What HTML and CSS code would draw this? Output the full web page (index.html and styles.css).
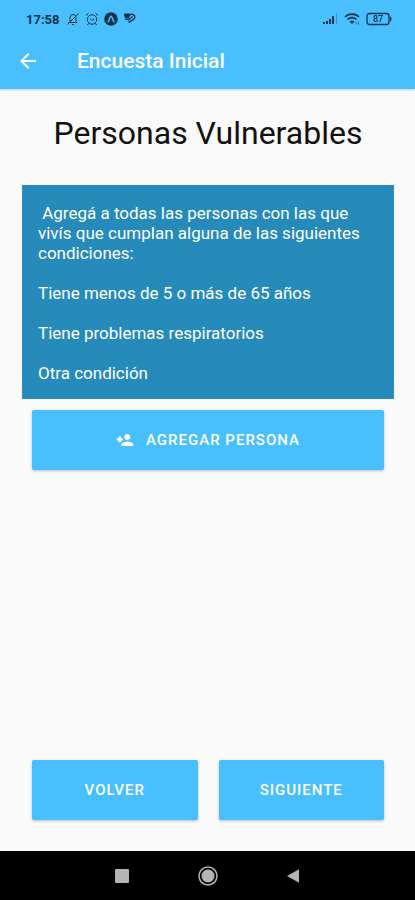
FILE: index.html
```html
<!DOCTYPE html>
<html lang="es">
<head>
    <meta charset="UTF-8">
    <title>Encuesta Inicial</title>
    <meta name="viewport" content="width=device-width, initial-scale=1.0">
    <link rel="stylesheet" href="styles.css">
</head>
<body>
    <header>
        <div class="status-bar">
            <span class="clock">17:58</span>
            <div class="status-icons">
                <svg width="14" height="14" viewBox="0 0 14 14" fill="none" stroke="currentColor">
                    <path d="M2.5 10.5h9M4 10V6.500C4 4 5 2.500 7 2.500S10 4 10 6.500V10M6 12.500h2M12.500 1.500L1.500 12.500"/>
                </svg>
                <svg width="14" height="14" viewBox="0 0 14 14" fill="none" stroke="currentColor">
                    <circle cx="7" cy="7.500" r="4.700"/>
                    <path d="M1 3.500L3.500 1.200M13 3.500L10.500 1.200M5 6.500L7 8.500L9.200 7M3.500 11.500L2.500 13M10.500 11.500L11.500 13"/>
                </svg>
                <svg width="14" height="14" viewBox="0 0 14 14">
                    <circle cx="7" cy="7" r="6.800" fill="currentColor"/>
                    <path d="M4 9.800C5.500 8 6 4 7 4S8.500 8 10 9.800" fill="none" stroke="#49bfff" stroke-width="1.500" stroke-linecap="round"/>
                </svg>
                <svg width="14" height="14" viewBox="0 0 14 14" fill="none" stroke="currentColor">
                    <path d="M1.500 2h5L5.500 6L2 5z" fill="currentColor"/>
                    <path d="M6 3C9 1.500 12 2.500 11.800 5.500C11.500 8 8 8.500 5.500 10.500M2 7L5.500 7.500L9.500 4.500" stroke-width="1.500"/>
                </svg>
            </div>
            <div class="status-icons status-right">
                <svg width="16" height="14" viewBox="0 0 16 14" fill="currentColor">
                    <path d="M1 10h2v2H1zM4 9h2v3H4zM7 7h2v5H7zM10 4h2v8h-2z"/>
                    <path d="M14 1h1v11h-1z" opacity=".3"/>
                </svg>
                <svg width="16" height="14" viewBox="0 0 16 14" fill="none" stroke="currentColor" stroke-width="1.600">
                    <path d="M1 5C4.500 1.200 11.500 1.200 15 5M3.500 7.500C6 5 10 5 12.500 7.500"/>
                    <path d="M5.500 9.500C7 8.300 9 8.300 10.500 9.500L8 12z" fill="currentColor" stroke="none"/>
                    <path d="M12 9.500v3M14.500 9.500v3" stroke-width="1" opacity=".6"/>
                </svg>
                <div class="battery">
                    <svg width="27" height="14" viewBox="0 0 27 14" fill="none" stroke="currentColor" stroke-width="1.300">
                        <rect x="1" y="1.500" width="22" height="11" rx="2.500"/>
                        <path d="M24 4Q27 7 24 10z" fill="currentColor" stroke="none"/>
                    </svg>
                    <span>87</span>
                </div>
            </div>
        </div>
        <div class="app-bar">
            <button class="back" type="button" aria-label="Atrás">
                <svg width="24" height="24" viewBox="0 0 24 24" fill="currentColor">
                    <path d="M20 11H7.830l5.590-5.590L12 4l-8 8 8 8 1.410-1.410L7.830 13H20v-2z"/>
                </svg>
            </button>
            <h1>Encuesta Inicial</h1>
        </div>
    </header>

    <main>
        <h2>Personas Vulnerables</h2>
        <div class="info">
            <p>&nbsp;Agregá a todas las personas con las que vivís que cumplan alguna de las siguientes condiciones:</p>
            <p>Tiene menos de 5 o más de 65 años</p>
            <p>Tiene problemas respiratorios</p>
            <p>Otra condición</p>
        </div>
        <div class="actions">
            <button class="btn" type="button">
                <svg width="18" height="18" viewBox="0 0 24 24" fill="currentColor">
                    <path d="M15 12c2.210 0 4-1.790 4-4s-1.790-4-4-4-4 1.790-4 4 1.790 4 4 4zm-8.500-2.500V7h-3v2.500H1v3h2.500V15h3v-2.500H9v-3zm8.500 4.500c-2.670 0-8 1.340-8 4v2h16v-2c0-2.660-5.330-4-8-4z"/>
                </svg>
                AGREGAR PERSONA
            </button>
        </div>
        <div class="actions bottom">
            <button class="btn" type="button">VOLVER</button>
            <button class="btn" type="button">SIGUIENTE</button>
        </div>
    </main>

    <nav class="system-nav">
        <button type="button" aria-label="Recientes">
            <svg width="20" height="20" viewBox="0 0 20 20"><rect x="3" y="3" width="14" height="14" rx="1" fill="currentColor"/></svg>
        </button>
        <button type="button" aria-label="Inicio">
            <svg width="20" height="20" viewBox="0 0 20 20">
                <circle cx="10" cy="10" r="9" fill="none" stroke="currentColor" stroke-width="1.500"/>
                <circle cx="10" cy="10" r="6.500" fill="currentColor"/>
            </svg>
        </button>
        <button type="button" aria-label="Volver atrás">
            <svg width="20" height="20" viewBox="0 0 20 20"><path d="M3 10L15 3.200V16.800z" fill="currentColor"/></svg>
        </button>
    </nav>
</body>
</html>
```

FILE: styles.css
```css
* { box-sizing: border-box; }
body {
    display: flex;
    flex-direction: column;
    min-height: 100vh;
    margin: 0;
    font-family: Roboto, sans-serif;
    background-color: #fafafa;
    color: #111;
}
svg { display: block; flex-shrink: 0; }
button {
    font-family: inherit;
    border: none;
    cursor: pointer;
}
header {
    background-color: #49bfff;
    box-shadow: 0 1px 2px rgba(0,0,0,0.2);
}

/* Status bar */
.status-bar {
    display: flex;
    align-items: center;
    height: 32px;
    padding: 6px 22px 0 26px;
    color: #103448;
}
.clock {
    font-size: 13px;
    font-weight: 700;
    margin-right: 6px;
}
.status-icons { display: flex; align-items: center; gap: 5px; }
.status-right { margin-left: auto; gap: 6px; }
.battery { position: relative; }
.battery span {
    position: absolute;
    inset: 0 3px 0 0;
    font-size: 9px;
    font-weight: 500;
    line-height: 14px;
    text-align: center;
}

/* App bar */
.app-bar {
    display: flex;
    align-items: center;
    height: 57px;
    padding: 0 16px;
    color: #fff;
}
.back {
    padding: 0;
    margin-right: 37px;
    background: none;
    color: inherit;
}
h1 {
    margin: 0;
    font-size: 21px;
    font-weight: 500;
}

/* Content */
main {
    flex: 1;
    display: flex;
    flex-direction: column;
    padding: 24px 21px 31px 22px;
}
h2 {
    margin: 0 0 32px;
    font-size: 32px;
    font-weight: 400;
    line-height: 40px;
    text-align: center;
}
.info {
    padding: 18px 16px 16px;
    background-color: #268abb;
    color: #fff;
    font-size: 17px;
    line-height: 20px;
}
.info p { margin: 0 0 20px; }
.info p:last-child { margin-bottom: 0; }
.actions {
    display: flex;
    gap: 21px;
    padding: 11px 10px 0;
}
.bottom { margin-top: auto; }
.btn {
    flex: 1;
    display: flex;
    align-items: center;
    justify-content: center;
    gap: 12px;
    height: 60px;
    padding: 0;
    border-radius: 2px;
    background-color: #49bfff;
    box-shadow: 0 1px 3px rgba(0,0,0,0.25);
    color: #fff;
    font-size: 15px;
    font-weight: 500;
    letter-spacing: 1px;
}

/* Android navigation */
.system-nav {
    display: flex;
    align-items: center;
    justify-content: center;
    gap: 66px;
    height: 49px;
    background-color: #000;
}
.system-nav button {
    padding: 0;
    background: none;
    color: #b4b4b4;
}
```
